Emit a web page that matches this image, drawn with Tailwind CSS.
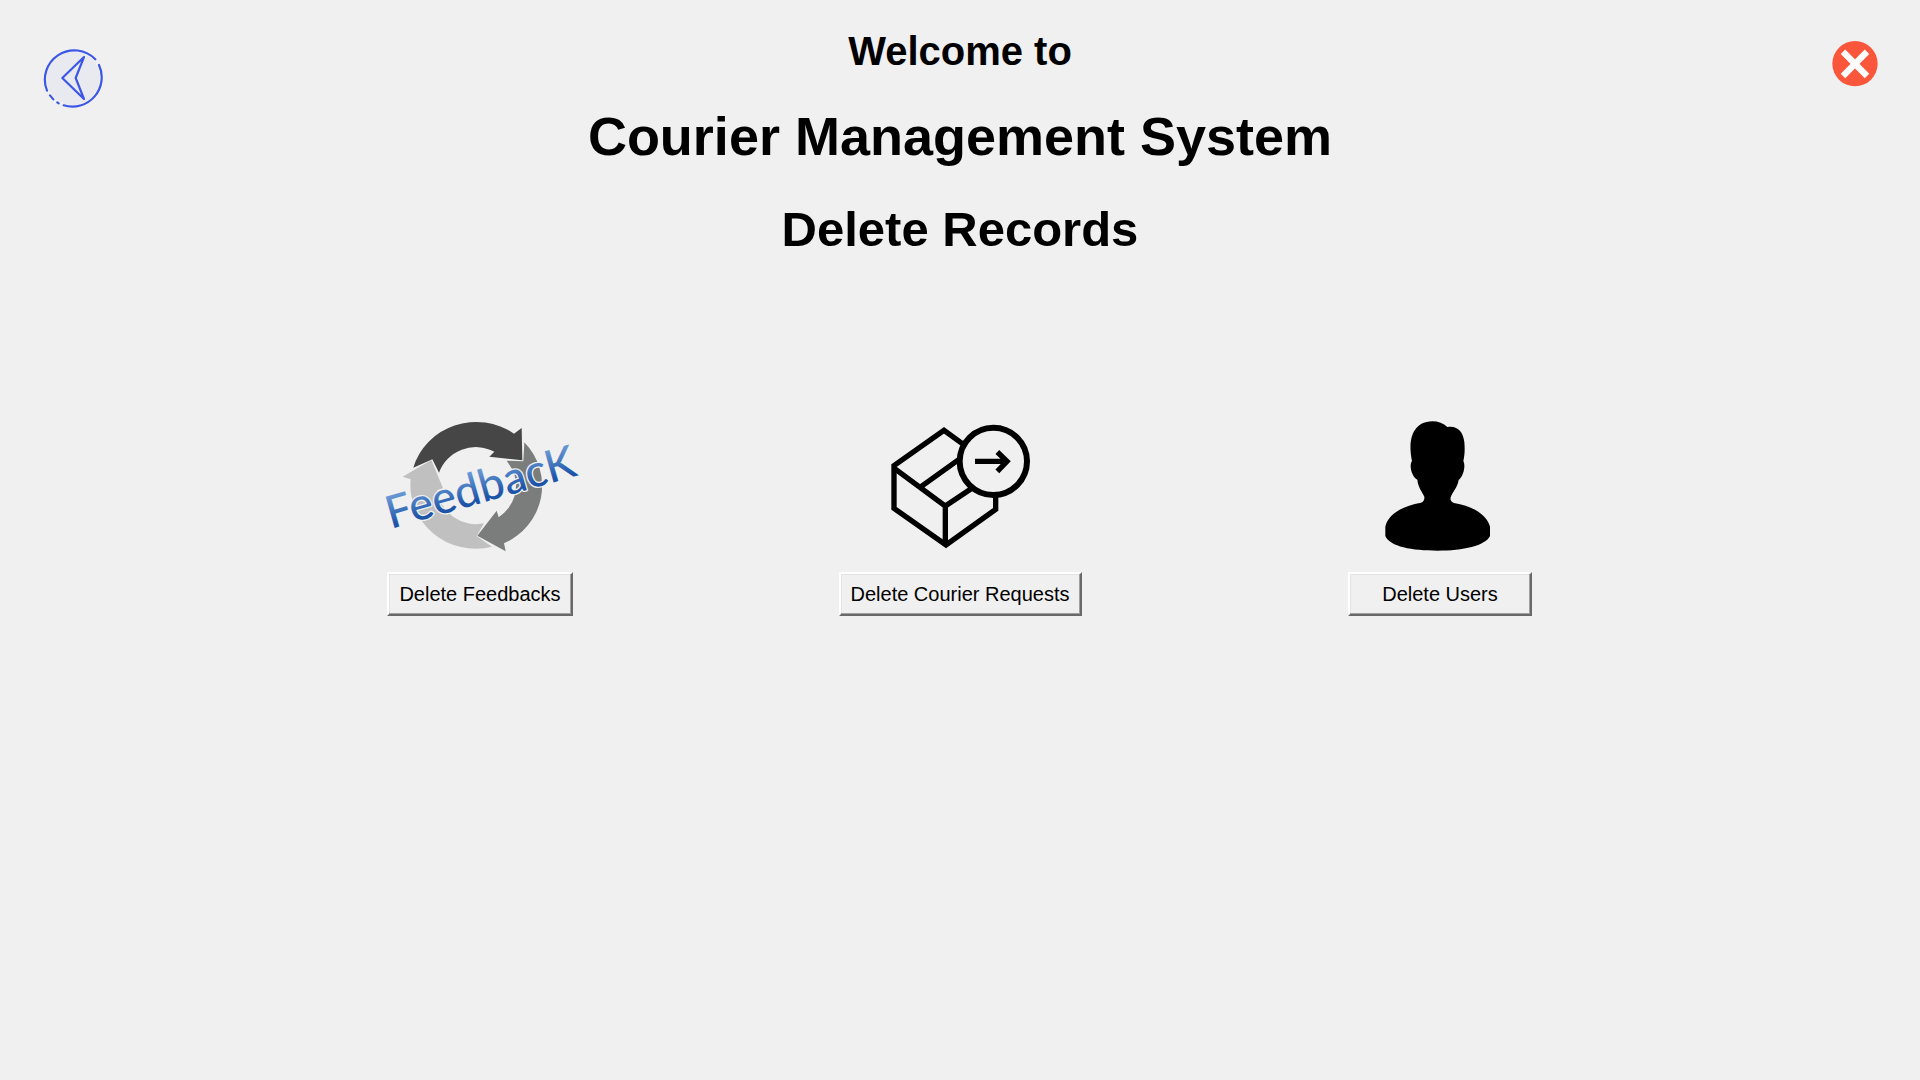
<!DOCTYPE html>
<html lang="en">
<head>
<meta charset="utf-8">
<meta name="viewport" content="width=device-width, initial-scale=1">
<title>Courier Management System</title>
<script src="https://cdn.jsdelivr.net/npm/@tailwindcss/browser@4"></script>
</head>
<body class="min-h-screen bg-[#f0f0f0] text-black font-['Liberation_Sans',Arial,sans-serif]">
<header class="grid grid-cols-[1fr_auto_1fr] items-start px-[42px] pt-[27px]">
  <button type="button" aria-label="Back" class="mt-5 justify-self-start">
    <svg class="block size-[62px]" viewBox="36 36 186 186" fill="none" stroke="#3c56e6" stroke-width="6.5" stroke-linecap="round" stroke-linejoin="round">
      <circle cx="129" cy="129" r="80" fill="#e8eaf0" stroke="none"/>
      <path d="M51 167A88 88 0 0 1 196 73M207 90A88 88 0 0 1 101 211M60 181L70 193M82 202L86 205"/>
      <path d="M162 66L97 129L162 192L137 129Z"/>
    </svg>
  </button>
  <div class="flex flex-col items-center gap-[30px] text-center font-bold">
    <p class="text-[40px] leading-[48px]">Welcome to</p>
    <h1 class="text-[54px] leading-[62px]">Courier Management System</h1>
    <h2 class="text-[49px] leading-[64px]">Delete Records</h2>
  </div>
  <button type="button" aria-label="Close" class="mt-3.5 justify-self-end">
    <svg class="block size-[46px]" viewBox="51 48 138 138">
      <circle cx="120" cy="116" r="68" fill="#fa563c"/>
      <path d="M84 80L156 153M156 80L84 153" stroke="#fff" stroke-width="19"/>
    </svg>
  </button>
</header>

<main class="mx-auto mt-[151px] grid w-3/4 grid-cols-3">
  <section class="flex flex-col items-center">
    <svg class="block h-40 w-[220px]" viewBox="0 36 660 480" role="img" aria-label="Feedback">
      <defs>
        <linearGradient id="ink" x1="0" y1="0" x2="0" y2="1">
          <stop offset=".2" stop-color="#6b9bd6"/>
          <stop offset=".75" stop-color="#1d54a8"/>
        </linearGradient>
      </defs>
      <path fill="#c0c0c0" d="M98 230L184 180L219 265L202 270A117 115 0 0 0 342 370L320 408L366 440A196 190 0 0 1 122 238Z"/>
      <path fill="#7b7d7c" d="M463 127A196 190 0 0 1 402 430L407 454L322 407L380 332L386 352A117 115 0 0 0 428 210L410 182L460 184Z"/>
      <path fill="#464646" d="M130 203A196 190 0 0 1 432 101L455 84L457 181L358 170L373 155A117 115 0 0 0 207 218L187 178Z"/>
      <g transform="translate(62 387) rotate(-16)" font-family="Lato, sans-serif" font-size="135" font-weight="500" stroke-linejoin="round">
        <text fill="url(#ink)" stroke="#f0f0f0" stroke-width="8" paint-order="stroke">FeedbacK</text>
      </g>
    </svg>
    <button type="button" class="h-11 min-w-46 border-2 border-t-white border-l-white border-r-[#696969] border-b-[#696969] px-2.5 text-xl leading-6 shadow-[inset_-1px_-1px_#a0a0a0,inset_1px_1px_#e3e3e3]">Delete Feedbacks</button>
  </section>
  <section class="flex flex-col items-center">
    <svg class="block h-40 w-[260px]" viewBox="0 6 780 480" fill="none" stroke="#000" role="img" aria-label="Courier request">
      <g stroke-width="16">
        <path d="M400 103L342 61L192 167V295L348 405L497 298V260"/>
        <path d="M194 176L346 288V405M346 288L428 233M270 232L386 149"/>
      </g>
      <circle cx="490" cy="154" r="101" fill="#f0f0f0" stroke-width="18"/>
      <path stroke-width="16" d="M435 154H530M502 126L531 154L502 184"/>
    </svg>
    <button type="button" class="h-11 min-w-46 border-2 border-t-white border-l-white border-r-[#696969] border-b-[#696969] px-2.5 text-xl leading-6 shadow-[inset_-1px_-1px_#a0a0a0,inset_1px_1px_#e3e3e3]">Delete Courier Requests</button>
  </section>
  <section class="flex flex-col items-center">
    <svg class="block h-40 w-[220px]" viewBox="0 6 660 480" role="img" aria-label="User">
      <path d="M246 153C236 105 241 62 273 42C300 28 333 32 352 51C382 45 400 66 403 96C405 118 404 137 400 153C407 165 402 196 386 210C382 234 368 245 362 262C360 270 364 276 372 279C430 288 472 316 480 350V378C466 407 400 422 323 422C246 422 180 410 166 378V350C174 314 215 288 273 278C281 275 284 268 283 260C277 246 264 232 262 209C246 200 236 168 246 153Z"/>
    </svg>
    <button type="button" class="h-11 min-w-46 border-2 border-t-white border-l-white border-r-[#696969] border-b-[#696969] px-2.5 text-xl leading-6 shadow-[inset_-1px_-1px_#a0a0a0,inset_1px_1px_#e3e3e3]">Delete Users</button>
  </section>
</main>
</body>
</html>
